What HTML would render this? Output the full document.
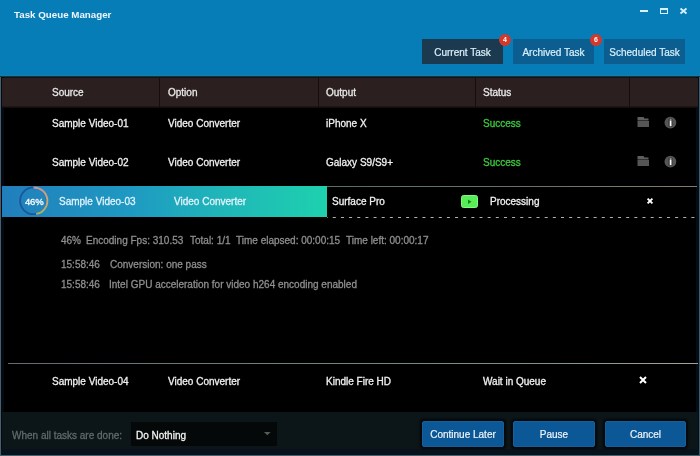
<!DOCTYPE html>
<html><head><meta charset="utf-8">
<style>
*{margin:0;padding:0;box-sizing:border-box}
html,body{width:700px;height:456px;overflow:hidden;background:#000}
body{position:relative;font-family:"Liberation Sans",sans-serif;font-size:10px;color:#fff}
.a{position:absolute;white-space:nowrap;line-height:12px;will-change:transform;-webkit-text-stroke:0.3px currentColor}
#top{position:absolute;left:0;top:0;width:700px;height:78px;background:linear-gradient(180deg,#077db8 0,#077db8 75px,#147eaa 75px,#147eaa 76px,#12343f 76px,#12343f 77px,#0d171b 77px)}
#title{left:14px;top:9px;font-weight:bold;font-size:9.75px;-webkit-text-stroke:0;color:#eef6fb}
.tab{will-change:transform;-webkit-text-stroke:0.2px currentColor;position:absolute;top:39px;width:81px;height:25px;background:#0b5e8f;color:#dcf0fb;text-align:center;line-height:27px;font-size:10px}
.tab.act{background:#1b3a4f}
.badge{will-change:transform;position:absolute;width:12px;height:12px;border-radius:50%;background:#d3382b;color:#fff;font-size:7px;font-weight:bold;text-align:center;line-height:12px}
#hdr{position:absolute;left:2px;top:78px;width:696px;height:30px;background:linear-gradient(180deg,#2d1e1e 0,#2b201f 2px,#2b201f 28px,#120e0e 29px)}
.sep{position:absolute;top:78px;width:1px;height:29px;background:#140e0d}
.hd{top:87px;color:#e8e8e8}
.cell{color:#f0f0f0}
.succ{color:#3ec83e}
#body{position:absolute;left:2px;top:107px;width:696px;height:305px;background:#000}
#bar{position:absolute;left:2px;top:186px;width:325px;height:31px;background:linear-gradient(90deg,#217ebc 0%,#1e9ac2 40%,#1fb8b8 70%,#1ed1ae 100%)}
#topline{position:absolute;left:327px;top:186px;width:370px;height:1px;background:linear-gradient(90deg,#557362,#687266 50%,#847c6c)}
#dash{position:absolute;left:327px;top:217px;width:370px;height:1px;background:repeating-linear-gradient(90deg,transparent 0 6px,#a9b5b0 6px 9px,transparent 9px 8.1px)}
.det{color:#8e8e8e}
#sepline{position:absolute;left:8px;top:363px;width:690px;height:1px;background:linear-gradient(90deg,#646a74,#6c8a80 50%,#7a9486 75%,#a4a494)}
#foot{position:absolute;left:2px;top:412px;width:696px;height:37px;background:#0c1517}
#dd{position:absolute;left:131px;top:422px;width:146px;height:24px;background:#040808}
.btn{will-change:transform;position:absolute;top:421px;width:82px;height:26px;background:#0c5896;border:1px solid #15609c;border-radius:2px;box-shadow:0 0 2px 2px #04080b;color:#eef4f8;text-align:center;line-height:26px;-webkit-text-stroke:0.2px currentColor}
#lb{position:absolute;left:0;top:77px;width:1px;height:379px;background:#48606e}
#lb2{position:absolute;left:1px;top:77px;width:3px;height:379px;background:linear-gradient(90deg,#03070f,#060b12 66%,#04070a)}
#rb{position:absolute;left:699px;top:77px;width:1px;height:379px;background:#3e5e6c}
#rb2{position:absolute;left:696px;top:77px;width:3px;height:379px;background:#060c16}
#bb{position:absolute;left:1px;top:449px;width:698px;height:7px;background:#08121c}
#bb2{position:absolute;left:0;top:455px;width:700px;height:1px;background:#41626f}
</style></head><body>
<div id="top"></div>
<div class="a" id="title">Task Queue Manager</div>
<!-- window controls -->
<svg style="position:absolute;left:630px;top:0" width="70" height="22" viewBox="630 0 70 22">
<rect x="640" y="10" width="8" height="2" fill="#d9f1ff"/>
<rect x="660.5" y="8.5" width="7" height="5" fill="none" stroke="#d9f1ff" stroke-width="1"/>
<rect x="660" y="8" width="8" height="2" fill="#d9f1ff"/>
<path d="M680.5 8.5 L686.5 13.5 M686.5 8.5 L680.5 13.5" stroke="#d9f1ff" stroke-width="1.8"/>
</svg>
<div class="tab act" style="left:421.5px">Current Task</div>
<div class="tab" style="left:513px">Archived Task</div>
<div class="tab" style="left:604px">Scheduled Task</div>
<div class="badge" style="left:499px;top:34px">4</div>
<div class="badge" style="left:590px;top:34px">6</div>

<div id="lb2"></div><div id="rb2"></div><div id="lb"></div><div id="rb"></div>
<div id="hdr"></div>
<div class="sep" style="left:159px"></div>
<div class="sep" style="left:318px"></div>
<div class="sep" style="left:475px"></div>
<div class="sep" style="left:629px"></div>
<div class="a hd" style="left:52px">Source</div>
<div class="a hd" style="left:168px">Option</div>
<div class="a hd" style="left:326px">Output</div>
<div class="a hd" style="left:483px">Status</div>

<!-- row1 -->
<div class="a cell" style="left:52px;top:118px">Sample Video-01</div>
<div class="a cell" style="left:168px;top:118px">Video Converter</div>
<div class="a cell" style="left:326px;top:118px">iPhone X</div>
<div class="a succ" style="left:483px;top:118px">Success</div>
<!-- row2 -->
<div class="a cell" style="left:52px;top:157px">Sample Video-02</div>
<div class="a cell" style="left:168px;top:157px">Video Converter</div>
<div class="a cell" style="left:326px;top:157px">Galaxy S9/S9+</div>
<div class="a succ" style="left:483px;top:157px">Success</div>
<!-- icons -->
<svg style="position:absolute;left:630px;top:110px" width="60" height="60" viewBox="630 110 60 60">
<g fill="#5e5e5e">
<path d="M637.5 117h6l1 1.5h4v2h-11z"/><path d="M637.5 121h11.5v6h-11.5z" fill="#555"/>
<path d="M637.5 156h6l1 1.5h4v2h-11z"/><path d="M637.5 160h11.5v6h-11.5z" fill="#555"/>
</g>
<g id="inf"><circle cx="670.4" cy="122.6" r="5.9" fill="#555"/>
<rect x="668.6" y="118.8" width="3.8" height="8" fill="#2c2c2c"/>
<rect x="669.7" y="121" width="1.8" height="5.2" fill="#fff"/><rect x="669.7" y="119.4" width="1.8" height="1.3" fill="#ddd"/></g>
<use href="#inf" y="39"/>
</svg>

<!-- row3 -->
<div id="bar"></div>
<div id="topline"></div>
<svg style="position:absolute;left:327px;top:216px" width="371" height="3" viewBox="327 216 371 3"><line x1="327" y1="217.5" x2="697" y2="217.5" stroke="#a9b5b0" stroke-width="1.2" stroke-dasharray="3 5.15" stroke-dashoffset="2.35"/></svg>
<svg style="position:absolute;left:0;top:180px" width="60" height="40" viewBox="0 180 60 40">
<defs><linearGradient id="arc" x1="0" y1="0" x2="0" y2="1"><stop offset="0" stop-color="#c89a94"/><stop offset="0.5" stop-color="#c8a67a"/><stop offset="1" stop-color="#a2b468"/></linearGradient></defs>
<circle cx="33.5" cy="200.8" r="13.4" fill="none" stroke="#1b5898" stroke-width="1.8"/>
<path d="M33.5 187.4 A13.4 13.4 0 0 1 36.2 214" fill="none" stroke="url(#arc)" stroke-width="2"/>
</svg>
<div class="a" style="left:25px;top:196px;color:#fff;font-size:9.5px;letter-spacing:-0.2px">46%</div>
<div class="a" style="left:59px;top:196px;color:#e2f2fb">Sample Video-03</div>
<div class="a" style="left:174px;top:196px;color:#e2f2fb">Video Converter</div>
<div class="a cell" style="left:332px;top:196px">Surface Pro</div>
<svg style="position:absolute;left:461px;top:195px" width="17" height="13" viewBox="0 0 17 13">
<rect x="0.5" y="0.5" width="16" height="12" rx="2" fill="#58ec58" stroke="#80fa80" stroke-width="1"/>
<path d="M7 4.5 L10.5 6.7 L7 9 Z" fill="#0d8a0d"/>
</svg>
<div class="a cell" style="left:490px;top:196px">Processing</div>
<svg style="position:absolute;left:646px;top:197px" width="8" height="8" viewBox="0 0 8 8">
<path d="M1.6 1.6 L6.4 6.4 M6.4 1.6 L1.6 6.4" stroke="#fff" stroke-width="1.9"/>
</svg>

<!-- details -->
<div class="a det" style="left:61px;top:235px">46%</div>
<div class="a det" style="left:85.5px;top:235px">Encoding Fps: 310.53</div>
<div class="a det" style="left:189.5px;top:235px">Total: 1/1</div>
<div class="a det" style="left:235.5px;top:235px">Time elapsed: 00:00:15</div>
<div class="a det" style="left:346px;top:235px">Time left: 00:00:17</div>
<div class="a det" style="left:61px;top:259px">15:58:46</div>
<div class="a det" style="left:109.5px;top:259px">Conversion: one pass</div>
<div class="a det" style="left:61px;top:279px">15:58:46</div>
<div class="a det" style="left:109px;top:279px">Intel GPU acceleration for video h264 encoding enabled</div>

<div id="sepline"></div>
<!-- row4 -->
<div class="a cell" style="left:52px;top:376px">Sample Video-04</div>
<div class="a cell" style="left:168px;top:376px">Video Converter</div>
<div class="a cell" style="left:326px;top:376px">Kindle Fire HD</div>
<div class="a cell" style="left:483px;top:376px">Wait in Queue</div>
<svg style="position:absolute;left:639px;top:376px" width="8" height="8" viewBox="0 0 8 8">
<path d="M1 1 L7 7 M7 1 L1 7" stroke="#fff" stroke-width="2"/>
</svg>

<!-- footer -->
<div id="bb"></div><div id="bb2"></div>
<div id="foot"></div>
<div class="a" style="left:12px;top:430px;color:#5f6a6e">When all tasks are done:</div>
<div id="dd"></div>
<div class="a" style="left:136px;top:430px;color:#f2f2f2">Do Nothing</div>
<svg style="position:absolute;left:263px;top:431px" width="9" height="6" viewBox="0 0 9 6"><path d="M1 1 L7.6 1 L4.3 4.3 Z" fill="#5a5a5a"/></svg>
<div class="btn" style="left:422px">Continue Later</div>
<div class="btn" style="left:513px">Pause</div>
<div class="btn" style="left:605px;width:81px">Cancel</div>
</body></html>
